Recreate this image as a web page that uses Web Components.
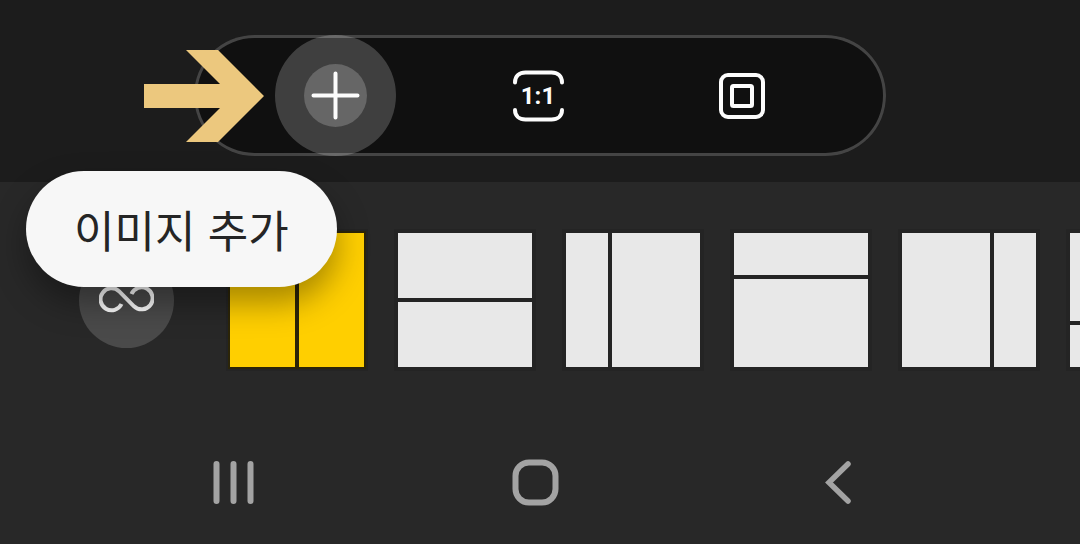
<!DOCTYPE html>
<html lang="ko">
<head>
<meta charset="utf-8">
<meta name="viewport" content="width=device-width, initial-scale=1">
<title>Collage editor</title>
<style>
    body {
        margin: 0;
        background: #282828;
        font-family: "Noto Sans CJK KR", "Noto Sans", sans-serif;
    }
</style>
</head>
<body>
<collage-editor></collage-editor>

<script>
function render(element, html) {
    const template = document.createElement('template');
    template.innerHTML = html;
    element.attachShadow({ mode: 'open' });
    element.shadowRoot.appendChild(template.content.cloneNode(true));
}

// Round button, the icon goes into the slot
customElements.define(
    'tool-button',
    class extends HTMLElement {
        constructor() {
            super();
            render(this, `
                <style>
                    :host {
                        display: block;
                    }

                    button {
                        display: flex;
                        justify-content: center;
                        align-items: center;
                        width: var(--size, 121px);
                        height: var(--size, 121px);
                        padding: 0;
                        border: 0;
                        border-radius: 50%;
                        background: var(--fill, transparent);
                        color: inherit;
                        cursor: pointer;
                    }

                    :host([pressed]) button {
                        background: rgba(255, 255, 255, 0.2);
                    }
                </style>
                <button type="button"><slot></slot></button>
            `);
        }

        connectedCallback() {
            const button = this.shadowRoot.querySelector('button');
            button.setAttribute('aria-label', this.getAttribute('label'));
        }
    }
);

customElements.define(
    'tool-bar',
    class extends HTMLElement {
        constructor() {
            super();
            render(this, `
                <style>
                    :host {
                        display: flex;
                        justify-content: center;
                        padding: 35px 0 26px;
                        background: #1c1c1c;
                        color: #fcfcfc;
                    }

                    .pill {
                        display: flex;
                        justify-content: center;
                        gap: 82px;
                        box-sizing: border-box;
                        width: 64%;
                        padding-right: 4px;
                        border-radius: 61px;
                        background: #101010;
                        box-shadow: inset 0 0 0 3px #444;
                    }

                    svg {
                        display: block;
                        fill: none;
                        stroke: currentColor;
                        stroke-width: 4;
                        stroke-linecap: round;
                    }

                    text {
                        fill: currentColor;
                        stroke: none;
                        font: 700 24px Roboto, sans-serif;
                        text-anchor: middle;
                    }
                </style>
                <div class="pill" role="toolbar">
                    <tool-button label="이미지 추가" pressed>
                        <svg width="63" height="63" viewBox="0 0 63 63">
                            <circle cx="31.5" cy="31.5" r="31.5" fill="#666" stroke="none"/>
                            <path d="M31.5 9.5v44M9.5 31.5h44"/>
                        </svg>
                    </tool-button>
                    <tool-button label="1:1">
                        <svg width="53" height="53" viewBox="0 0 53 53">
                            <path d="M3 13.5C3 7 7.5 3.5 13.5 3.5h26C45.5 3.5 50 7 50 13.5M3 41C3 47 7.5 50.5 13.5 50.5h26C45.5 50.5 50 47 50 41"/>
                            <text x="26" y="35">1:1</text>
                        </svg>
                    </tool-button>
                    <tool-button label="테두리">
                        <svg width="47" height="47" viewBox="0 0 47 47">
                            <rect x="3" y="3" width="42" height="42" rx="7"/>
                            <rect x="14" y="14" width="20" height="20" rx="1.5"/>
                        </svg>
                    </tool-button>
                </div>
            `);
        }
    }
);

// split="row" or "column", ratio is the grid track list
customElements.define(
    'layout-tile',
    class extends HTMLElement {
        constructor() {
            super();
            render(this, `
                <style>
                    :host {
                        display: block;
                        flex: none;
                        --cell: #e8e8e8;
                        --line: #242424;
                    }

                    :host([selected]) {
                        --cell: #ffcf00;
                        --line: #2c2508;
                    }

                    button {
                        display: grid;
                        gap: 4px;
                        width: 134px;
                        height: 134px;
                        padding: 0;
                        border: 0;
                        background: var(--line);
                        box-shadow: 0 0 0 2px var(--line), 0 0 0 4px #242424;
                        cursor: pointer;
                    }

                    span {
                        background: var(--cell);
                    }
                </style>
                <button type="button"><span></span><span></span></button>
            `);
        }

        connectedCallback() {
            const button = this.shadowRoot.querySelector('button');
            const tracks = this.getAttribute('ratio');
            if (this.getAttribute('split') === 'column') {
                button.style.gridTemplateColumns = tracks;
            } else {
                button.style.gridTemplateRows = tracks;
            }
            button.setAttribute('aria-label', this.getAttribute('label'));
            button.setAttribute('aria-pressed', this.hasAttribute('selected'));
        }
    }
);

customElements.define(
    'layout-tray',
    class extends HTMLElement {
        constructor() {
            super();
            render(this, `
                <style>
                    :host {
                        display: flex;
                        align-items: center;
                        gap: 34px;
                        padding: 51px 0 55px 79px;
                        overflow: hidden;
                    }

                    .ratio {
                        flex: none;
                        margin-right: 22px;
                        color: #fcfcfc;
                        --size: 95px;
                        --fill: #4a4a4a;
                    }

                    svg {
                        display: block;
                        fill: none;
                        stroke: currentColor;
                        stroke-width: 4;
                    }
                </style>
                <tool-button class="ratio" label="자유 비율">
                    <svg width="55" height="29" viewBox="0 0 55 29">
                        <path d="M22.5 18A11 11 0 1 1 20 5.2L35 20.3A11 11 0 1 0 32.5 8"/>
                    </svg>
                </tool-button>
                <layout-tile label="레이아웃 1" split="column" ratio="65px 65px" selected></layout-tile>
                <layout-tile label="레이아웃 2" split="row" ratio="65px 65px"></layout-tile>
                <layout-tile label="레이아웃 3" split="column" ratio="42px 88px"></layout-tile>
                <layout-tile label="레이아웃 4" split="row" ratio="42px 88px"></layout-tile>
                <layout-tile label="레이아웃 5" split="column" ratio="88px 42px"></layout-tile>
                <layout-tile label="레이아웃 6" split="row" ratio="88px 42px"></layout-tile>
            `);
        }
    }
);

customElements.define(
    'system-nav',
    class extends HTMLElement {
        constructor() {
            super();
            render(this, `
                <style>
                    nav {
                        display: grid;
                        grid-template-columns: repeat(3, 1fr);
                        justify-items: center;
                        padding: 0 92px 0 82px;
                        color: #a3a3a3;
                        --size: 121px;
                    }

                    svg {
                        display: block;
                        fill: none;
                        stroke: currentColor;
                        stroke-width: 6;
                        stroke-linecap: round;
                    }
                </style>
                <nav>
                    <tool-button label="최근 앱">
                        <svg width="47" height="47" viewBox="0 0 47 47">
                            <path d="M6.5 5v37M23.5 5v37M40.5 5v37"/>
                        </svg>
                    </tool-button>
                    <tool-button label="홈">
                        <svg width="47" height="47" viewBox="0 0 47 47">
                            <rect x="3.5" y="3.5" width="40" height="40" rx="13.5"/>
                        </svg>
                    </tool-button>
                    <tool-button label="뒤로">
                        <svg width="47" height="47" viewBox="0 0 47 47">
                            <path d="M34 5L15 23.5L34 42" stroke-width="5.5"/>
                        </svg>
                    </tool-button>
                </nav>
            `);
        }
    }
);

customElements.define(
    'tool-tip',
    class extends HTMLElement {
        constructor() {
            super();
            render(this, `
                <style>
                    :host {
                        display: block;
                        padding: 0 48px;
                        border-radius: 58px;
                        background: #f7f7f7;
                        box-shadow: 0 16px 32px rgba(0, 0, 0, 0.35);
                        color: #252525;
                        font-size: 44px;
                        line-height: 116px;
                        white-space: nowrap;
                    }
                </style>
                <slot></slot>
            `);
        }
    }
);

customElements.define(
    'collage-editor',
    class extends HTMLElement {
        constructor() {
            super();
            render(this, `
                <style>
                    :host {
                        display: block;
                        position: relative;
                        min-height: 100vh;
                        overflow: hidden;
                    }

                    /* both lie over the toolbar and the tray */
                    .arrow {
                        position: absolute;
                        left: 144px;
                        top: 50px;
                        fill: #ecc87e;
                    }

                    tool-tip {
                        position: absolute;
                        left: 26px;
                        top: 171px;
                    }
                </style>
                <tool-bar></tool-bar>
                <layout-tray></layout-tray>
                <system-nav></system-nav>
                <svg class="arrow" width="120" height="92" viewBox="0 0 120 92" aria-hidden="true">
                    <path d="M0 34H76L42 0H74L120 46L74 92H42L76 58H0z"/>
                </svg>
                <tool-tip role="tooltip">이미지 추가</tool-tip>
            `);
        }
    }
);
</script>
</body>
</html>
